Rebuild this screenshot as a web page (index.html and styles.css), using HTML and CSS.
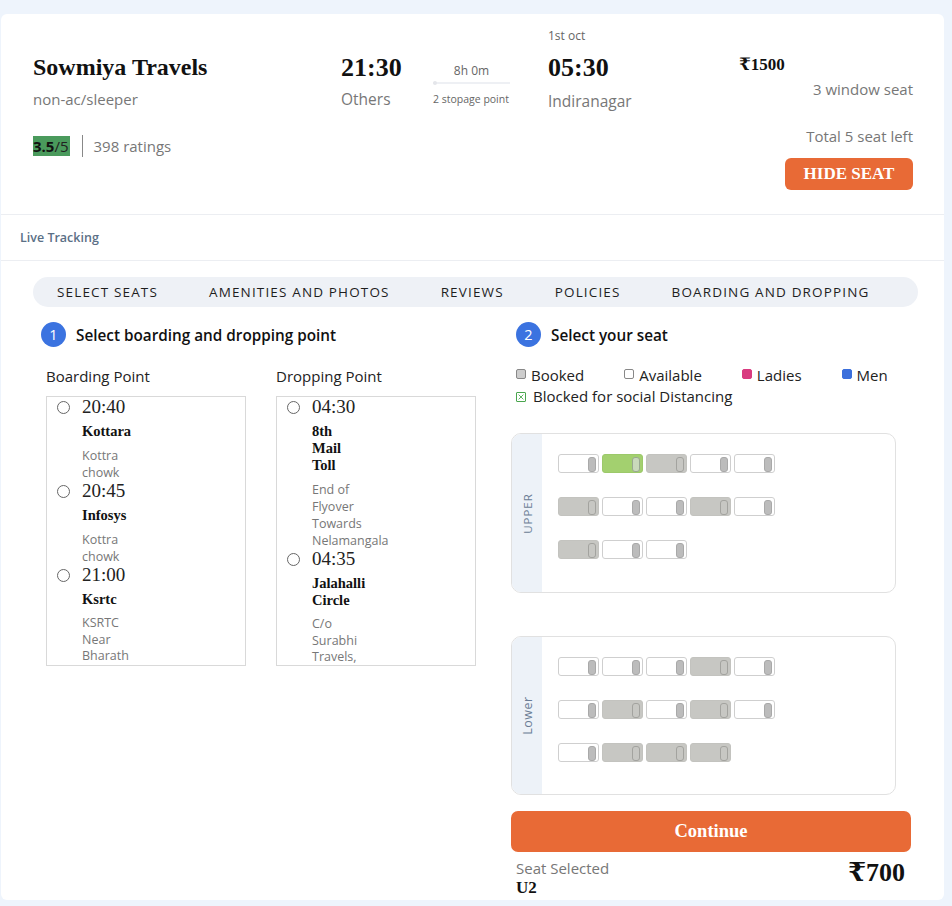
FILE: index.html
```html
<!DOCTYPE html>
<html>
<head>
<meta charset="utf-8">
<link rel="stylesheet" href="styles.css">
</head>
<body>
<div class="page">
  <div class="card">
    <div class="header">
      <div class="col-name">
        <h2 class="title">Sowmiya Travels</h2>
        <div class="sub">non-ac/sleeper</div>
        <div class="rating">
          <span class="score"><b>3.5</b>/5</span>
          <span class="sep"></span>
          <span class="count">398 ratings</span>
        </div>
      </div>
      <div class="col-dep">
        <div class="time">21:30</div>
        <div class="place">Others</div>
      </div>
      <div class="col-dur">
        <div class="dur">8h 0m</div>
        <div class="line"><span class="dot"></span></div>
        <div class="stops">2 stopage point</div>
      </div>
      <div class="col-arr">
        <div class="date">1st oct</div>
        <div class="time">05:30</div>
        <div class="place place-arr">Indiranagar</div>
      </div>
      <div class="col-price">
        <div class="price">₹1500</div>
      </div>
      <div class="col-seats">
        <div class="info">3 window seat</div>
        <div class="info info-total">Total 5 seat left</div>
        <button class="btn-hide">HIDE SEAT</button>
      </div>
    </div>

    <div class="tracking">Live Tracking</div>

    <div class="content">
      <nav class="tabs">
        <span class="tab">SELECT SEATS</span>
        <span class="tab">AMENITIES AND PHOTOS</span>
        <span class="tab">REVIEWS</span>
        <span class="tab">POLICIES</span>
        <span class="tab">BOARDING AND DROPPING</span>
      </nav>

      <div class="main">
        <section class="left">
          <div class="step"><span class="step-num">1</span><span class="step-title">Select boarding and dropping point</span></div>
          <div class="points">
            <div class="point-col">
              <div class="point-label">Boarding Point</div>
              <div class="point-box">
                <div class="pt">
                  <span class="radio"></span>
                  <div class="pt-text">
                    <div class="pt-time">20:40</div>
                    <div class="pt-name">Kottara</div>
                    <div class="pt-desc">Kottra chowk</div>
                  </div>
                </div>
                <div class="pt">
                  <span class="radio"></span>
                  <div class="pt-text">
                    <div class="pt-time">20:45</div>
                    <div class="pt-name">Infosys</div>
                    <div class="pt-desc">Kottra chowk</div>
                  </div>
                </div>
                <div class="pt">
                  <span class="radio"></span>
                  <div class="pt-text">
                    <div class="pt-time">21:00</div>
                    <div class="pt-name">Ksrtc</div>
                    <div class="pt-desc">KSRTC Near Bharath</div>
                  </div>
                </div>
              </div>
            </div>
            <div class="point-col">
              <div class="point-label">Dropping Point</div>
              <div class="point-box">
                <div class="pt">
                  <span class="radio"></span>
                  <div class="pt-text">
                    <div class="pt-time">04:30</div>
                    <div class="pt-name">8th Mail Toll</div>
                    <div class="pt-desc">End of Flyover Towards Nelamangala</div>
                  </div>
                </div>
                <div class="pt">
                  <span class="radio"></span>
                  <div class="pt-text">
                    <div class="pt-time">04:35</div>
                    <div class="pt-name">Jalahalli Circle</div>
                    <div class="pt-desc">C/o Surabhi Travels,</div>
                  </div>
                </div>
              </div>
            </div>
          </div>
        </section>

        <section class="right">
          <div class="step"><span class="step-num">2</span><span class="step-title">Select your seat</span></div>
          <div class="legend">
            <span class="lg"><span class="ic ic-booked"></span>Booked</span>
            <span class="lg"><span class="ic ic-avail"></span>Available</span>
            <span class="lg"><span class="ic ic-ladies"></span>Ladies</span>
            <span class="lg"><span class="ic ic-men"></span>Men</span>
            <span class="lg lg-blocked"><span class="ic ic-blocked"><svg viewBox="0 0 10 10" width="10" height="10"><path d="M2 2 L8 8 M8 2 L2 8" stroke="#4aa64e" stroke-width="1.1" fill="none"/></svg></span>Blocked for social Distancing</span>
          </div>

          <div class="deck">
            <div class="deck-label"><span>UPPER</span></div>
            <div class="deck-seats">
              <div class="row">
                <span class="seat"></span><span class="seat selected"></span><span class="seat booked"></span><span class="seat"></span><span class="seat"></span>
              </div>
              <div class="row">
                <span class="seat booked"></span><span class="seat"></span><span class="seat"></span><span class="seat booked"></span><span class="seat"></span>
              </div>
              <div class="row">
                <span class="seat booked"></span><span class="seat"></span><span class="seat"></span>
              </div>
            </div>
          </div>

          <div class="deck deck-lower">
            <div class="deck-label"><span class="lower">Lower</span></div>
            <div class="deck-seats">
              <div class="row">
                <span class="seat"></span><span class="seat"></span><span class="seat"></span><span class="seat booked"></span><span class="seat"></span>
              </div>
              <div class="row">
                <span class="seat"></span><span class="seat booked"></span><span class="seat"></span><span class="seat booked"></span><span class="seat"></span>
              </div>
              <div class="row">
                <span class="seat"></span><span class="seat booked"></span><span class="seat booked"></span><span class="seat booked"></span>
              </div>
            </div>
          </div>

          <button class="btn-continue">Continue</button>
          <div class="summary">
            <div>
              <div class="sel-label">Seat Selected</div>
              <div class="sel-seat">U2</div>
            </div>
            <div class="total">₹700</div>
          </div>
        </section>
      </div>
    </div>
  </div>
</div>
</body>
</html>
```

FILE: styles.css
```css
* { box-sizing: border-box; }
html, body { margin: 0; padding: 0; }
body {
  background: #eef4fc;
  font-family: "Open Sans", "Noto Sans", sans-serif;
  color: #222;
}
.page {
  padding: 14px 8px 6px 1px;
  height: 906px;
  overflow: hidden;
}
.card {
  background: #fff;
  border-radius: 6px;
  height: 886px;
  overflow: hidden;
}

/* header */
.header {
  display: grid;
  grid-template-columns: 308px 92px 115px 191px auto 1fr;
  padding: 14px 31px 24px 32px;
  border-bottom: 1px solid #eceef2;
}
.title {
  font-family: "Liberation Serif", serif;
  font-weight: bold;
  font-size: 24px;
  line-height: 26px;
  margin: 26px 0 0;
  color: #111;
}
.sub {
  font-size: 15px;
  line-height: 20px;
  color: #777;
  margin-top: 9px;
}
.rating {
  display: flex;
  align-items: center;
  margin-top: 26px;
  height: 22px;
}
.score {
  background: #4a9a5c;
  font-size: 15px;
  line-height: 20px;
  color: #222;
  padding: 0 1px 0 0;
}
.score b { font-weight: 700; color: #111; }
.sep {
  width: 1px;
  height: 22px;
  background: #888;
  margin: 0 11px 0 12px;
}
.count {
  font-size: 15px;
  color: #777;
}
.time {
  font-family: "Liberation Serif", serif;
  font-weight: bold;
  font-size: 26px;
  line-height: 28px;
  color: #111;
  margin-top: 26px;
}
.place {
  font-size: 15.5px;
  line-height: 20px;
  color: #777;
  margin-top: 7px;
}
.place-arr { margin-top: 9px; }
.col-dur { padding-top: 35px; width: 77px; text-align: center; }
.dur { font-size: 12px; line-height: 16px; color: #666; }
.line {
  position: relative;
  height: 2px;
  background: #eef0f4;
  margin-top: 3px;
}
.dot {
  position: absolute;
  left: 0;
  top: -1px;
  width: 4px;
  height: 4px;
  border-radius: 50%;
  background: #e4e6ea;
}
.stops {
  font-size: 10.5px;
  line-height: 14px;
  color: #666;
  margin-top: 8px;
  white-space: nowrap;
  text-align: left;
}
.date {
  font-size: 12px;
  line-height: 16px;
  color: #666;
}
.col-arr .time { margin-top: 10px; }
.price {
  font-family: "Liberation Serif", "DejaVu Serif", serif;
  font-weight: bold;
  font-size: 17px;
  line-height: 20px;
  margin-top: 27px;
  color: #111;
}
.col-seats {
  display: flex;
  flex-direction: column;
  align-items: flex-end;
  padding-top: 51px;
}
.info {
  font-size: 15px;
  line-height: 20px;
  color: #777;
}
.info-total { margin-top: 27px; }
.btn-hide {
  margin-top: 12px;
  height: 32px;
  width: 128px;
  border: none;
  border-radius: 6px;
  background: #e86a36;
  color: #fff;
  font-family: "Liberation Serif", serif;
  font-weight: bold;
  font-size: 17px;
  padding: 0;
}

.tracking {
  height: 46px;
  line-height: 46px;
  padding-left: 19px;
  font-size: 12.5px;
  font-weight: 600;
  color: #5b6f86;
  border-bottom: 1px solid #eceef2;
}

.content { padding: 16px 26px 0 32px; }
.tabs {
  display: flex;
  align-items: center;
  gap: 51px;
  height: 30px;
  background: #eef1f6;
  border-radius: 15px;
  padding-left: 24px;
}
.tab {
  font-size: 13.5px;
  font-weight: 500;
  letter-spacing: 1.15px;
  color: #1e1e1e;
}

.main {
  display: grid;
  grid-template-columns: 470px 400px;
  padding-left: 8px;
  margin-top: 15px;
}
.step {
  display: flex;
  align-items: center;
  height: 25px;
}
.step-num {
  width: 25px;
  height: 25px;
  border-radius: 50%;
  background: #3b73e0;
  color: #fff;
  font-size: 14.5px;
  line-height: 25px;
  text-align: center;
}
.step-title {
  margin-left: 10px;
  font-size: 15.3px;
  font-weight: 600;
  color: #111;
}
.right .step { padding-left: 5px; }

.points {
  display: flex;
  gap: 30px;
  padding-left: 5px;
  margin-top: 19px;
}
.point-label {
  font-size: 15px;
  line-height: 20px;
  color: #222;
}
.point-box {
  margin-top: 10px;
  width: 200px;
  height: 270px;
  border: 1px solid #d9d9d9;
  overflow: hidden;
}
.pt { display: flex; }
.radio {
  flex: none;
  width: 13px;
  height: 13px;
  border: 1px solid #666;
  border-radius: 50%;
  margin: 4px 12px 0 10px;
}
.pt-time {
  font-family: "Liberation Serif", serif;
  font-size: 19px;
  line-height: 20px;
  color: #222;
}
.pt-name {
  font-family: "Liberation Serif", serif;
  font-weight: bold;
  font-size: 14.5px;
  line-height: 17px;
  margin-top: 6px;
  width: min-content;
  color: #111;
}
.pt-desc {
  font-size: 12.5px;
  line-height: 17px;
  color: #777;
  margin-top: 7px;
  width: 62px;
}
.pt:last-child .pt-desc { line-height: 16.5px; }

.legend {
  display: flex;
  flex-wrap: wrap;
  column-gap: 40px;
  padding-left: 5px;
  margin-top: 18px;
}
.lg {
  font-size: 15px;
  line-height: 21px;
  color: #222;
  display: inline-flex;
  align-items: flex-start;
}
.ic {
  width: 10px;
  height: 10px;
  border-radius: 2px;
  margin: 4px 5px 0 0;
  border: 1px solid #888;
  flex: none;
}
.ic-booked { background: #cdcdcd; }
.ic-avail { background: #fff; }
.ic-ladies { background: #d93b80; border-color: #d93b80; }
.ic-men { background: #3b6fdc; border-color: #3b6fdc; }
.ic-blocked { border-color: #4aa64e; border-radius: 1px; margin-top: 6px; margin-right: 7px; }
.ic-blocked svg { display: block; width: 8px; height: 8px; }

.deck {
  display: flex;
  width: 385px;
  height: 160px;
  border: 1px solid #e1e1e1;
  border-radius: 10px;
  overflow: hidden;
  margin-top: 26px;
}
.deck-lower { margin-top: 43px; height: 159px; }
.deck-label {
  width: 30px;
  flex: none;
  background: #edf2f8;
  display: flex;
  align-items: center;
  justify-content: center;
}
.deck-label span {
  transform: rotate(-90deg);
  font-size: 11.5px;
  letter-spacing: 1px;
  color: #6b7d95;
  white-space: nowrap;
}
.deck-label .lower { letter-spacing: 0.5px; font-size: 12.5px; }
.deck-seats {
  padding: 20px 0 0 16px;
  display: flex;
  flex-direction: column;
  gap: 24px;
}
.row { display: flex; gap: 3px; }
.seat {
  position: relative;
  width: 41px;
  height: 19px;
  border: 1px solid #cfcfcf;
  border-radius: 3px;
  background: #fff;
}
.seat::after {
  content: "";
  position: absolute;
  right: 2px;
  top: 2px;
  width: 6px;
  height: 13px;
  border-radius: 3px;
  border: 1px solid #a9a9a9;
  background: #bcbcbc;
}
.seat.booked { background: #c7c7c3; border-color: #c3c3bf; }
.seat.booked::after { background: #c7c7c3; border-color: #a3a39f; }
.seat.selected { background: #a3d06f; border-color: #9cc96a; }
.seat.selected::after { background: #c9d9bb; border-color: #98a890; }

.btn-continue {
  display: block;
  width: 400px;
  height: 41px;
  margin-top: 16px;
  border: none;
  border-radius: 7px;
  background: #e86a36;
  color: #fff;
  font-family: "Liberation Serif", serif;
  font-weight: bold;
  font-size: 18.5px;
  padding: 0;
}
.summary {
  display: flex;
  justify-content: space-between;
  align-items: flex-start;
  width: 400px;
  padding: 6px 6px 0 5px;
}
.sel-label { font-size: 15px; line-height: 20px; color: #777; }
.sel-seat {
  font-family: "Liberation Serif", serif;
  font-weight: bold;
  font-size: 17px;
  line-height: 20px;
  color: #111;
}
.total {
  font-family: "Liberation Serif", "DejaVu Serif", serif;
  font-weight: bold;
  font-size: 26px;
  line-height: 30px;
  color: #111;
}
```
